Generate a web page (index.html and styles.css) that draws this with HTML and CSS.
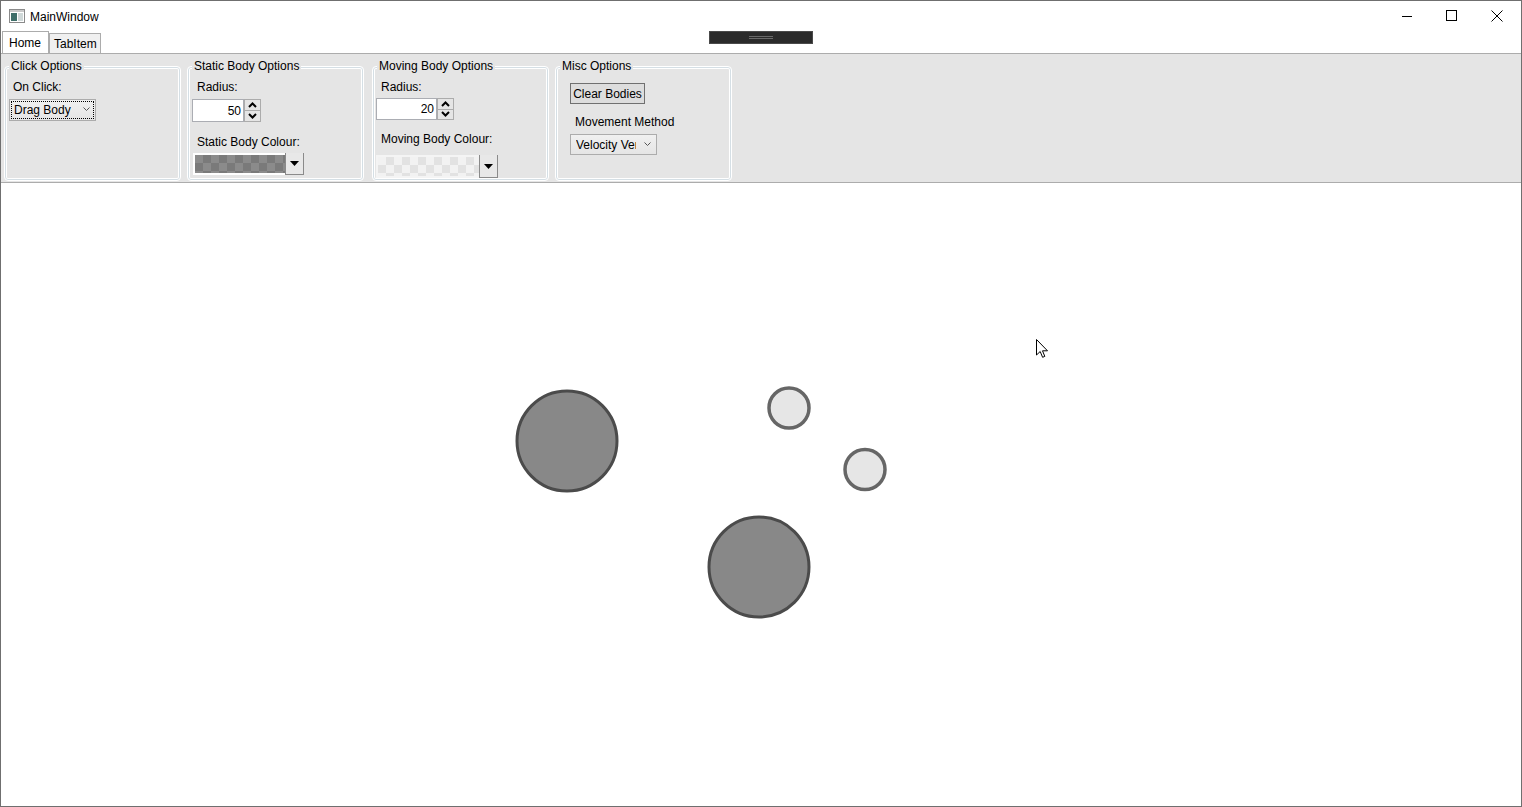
FILE: index.html
```html
<!DOCTYPE html>
<html>
<head>
<meta charset="utf-8">
<link rel="stylesheet" href="styles.css">
</head>
<body>
<div class="window">
  <div class="titlebar">
    <svg class="app-icon" width="16" height="14" viewBox="0 0 16 14">
      <rect x="0.5" y="0.5" width="15" height="13" fill="#fff" stroke="#8a8a8a"/>
      <rect x="1" y="1" width="14" height="2" fill="#c9c9c9"/>
      <rect x="2" y="4" width="6" height="8" fill="#3f6f6a"/>
      <rect x="9" y="4" width="5" height="8" fill="#cfd8d8"/>
    </svg>
    <span class="title">MainWindow</span>
    <div class="controls">
      <div class="ctl"><svg width="12" height="12" viewBox="0 0 12 12"><line x1="1" y1="6.5" x2="11" y2="6.5" stroke="#000" stroke-width="1"/></svg></div>
      <div class="ctl"><svg width="12" height="12" viewBox="0 0 12 12"><rect x="0.5" y="0.5" width="10" height="10" fill="none" stroke="#000" stroke-width="1"/></svg></div>
      <div class="ctl"><svg width="12" height="12" viewBox="0 0 12 12"><path d="M0.5 0.5 L11.5 11.5 M11.5 0.5 L0.5 11.5" stroke="#000" stroke-width="1"/></svg></div>
    </div>
  </div>
  <div class="tabstrip">
    <div class="tab active">Home</div>
    <div class="tab">TabItem</div>
  </div>
  <div class="debugbar"><span class="grip"></span></div>
  <div class="panel">
    <div class="group g1">
      <span class="gtitle">Click Options</span>
      <div class="lbl l1">On Click:</div>
      <div class="combo focus c1"><span>Drag Body</span><svg class="chev" width="7" height="5" viewBox="0 0 7 5"><path d="M0.5 0.5 L3.5 3.5 L6.5 0.5" fill="none" stroke="#555" stroke-width="1"/></svg></div>
    </div>
    <div class="group g2">
      <span class="gtitle">Static Body Options</span>
      <div class="lbl l2">Radius:</div>
      <div class="updown u2">
        <div class="ud-text">50</div>
        <div class="ud-btns">
          <div class="ud-btn"><svg width="9" height="6" viewBox="0 0 9 6"><path d="M1 5 L4.5 1.5 L8 5" fill="none" stroke="#000" stroke-width="2"/></svg></div>
          <div class="ud-btn"><svg width="9" height="6" viewBox="0 0 9 6"><path d="M1 1 L4.5 4.5 L8 1" fill="none" stroke="#000" stroke-width="2"/></svg></div>
        </div>
      </div>
      <div class="lbl l2b">Static Body Colour:</div>
      <div class="picker p2">
        <div class="swatch dark"></div>
        <div class="pbtn"><svg width="9" height="5" viewBox="0 0 9 5"><path d="M0 0 H9 L4.5 5 Z" fill="#000"/></svg></div>
      </div>
    </div>
    <div class="group g3">
      <span class="gtitle">Moving Body Options</span>
      <div class="lbl l3">Radius:</div>
      <div class="updown u3">
        <div class="ud-text">20</div>
        <div class="ud-btns">
          <div class="ud-btn"><svg width="9" height="6" viewBox="0 0 9 6"><path d="M1 5 L4.5 1.5 L8 5" fill="none" stroke="#000" stroke-width="2"/></svg></div>
          <div class="ud-btn"><svg width="9" height="6" viewBox="0 0 9 6"><path d="M1 1 L4.5 4.5 L8 1" fill="none" stroke="#000" stroke-width="2"/></svg></div>
        </div>
      </div>
      <div class="lbl l3b">Moving Body Colour:</div>
      <div class="picker p3">
        <div class="swatch light"></div>
        <div class="pbtn"><svg width="9" height="5" viewBox="0 0 9 5"><path d="M0 0 H9 L4.5 5 Z" fill="#000"/></svg></div>
      </div>
    </div>
    <div class="group g4">
      <span class="gtitle">Misc Options</span>
      <div class="button b4">Clear Bodies</div>
      <div class="lbl l4">Movement Method</div>
      <div class="combo c4"><span class="clip">Velocity Verlet</span><svg class="chev" width="7" height="5" viewBox="0 0 7 5"><path d="M0.5 0.5 L3.5 3.5 L6.5 0.5" fill="none" stroke="#555" stroke-width="1"/></svg></div>
    </div>
  </div>
  <div class="canvas">
    <svg class="scene" width="1520" height="623" viewBox="0 0 1520 623">
      <circle cx="566" cy="258" r="50" fill="#888888" stroke="#4b4b4b" stroke-width="3"/>
      <circle cx="758" cy="384" r="50" fill="#888888" stroke="#4b4b4b" stroke-width="3"/>
      <circle cx="788" cy="225" r="20" fill="#e6e6e6" stroke="#666666" stroke-width="3.5"/>
      <circle cx="864" cy="286.5" r="20" fill="#e6e6e6" stroke="#666666" stroke-width="3.5"/>
    </svg>
    <svg class="cursor" width="13" height="20" viewBox="0 0 13 20">
      <path d="M0.5 0.5 L0.5 16 L4.2 12.5 L6.6 18.3 L8.8 17.4 L6.5 11.8 L11.5 11.8 Z" fill="#fff" stroke="#000" stroke-width="1" stroke-linejoin="miter"/>
    </svg>
  </div>
</div>
</body>
</html>
```

FILE: styles.css
```css
* { box-sizing: border-box; }
html, body { margin: 0; padding: 0; }
body {
  font-family: "Liberation Sans", Arial, sans-serif;
  font-size: 12px;
  color: #000;
  background: #fff;
}
.window {
  position: relative;
  width: 1522px;
  height: 807px;
  border: 1px solid #6f6f6f;
  display: flex;
  flex-direction: column;
  background: #fff;
  overflow: hidden;
}
.titlebar {
  height: 30px;
  display: flex;
  align-items: center;
  flex-shrink: 0;
}
.app-icon { margin-left: 8px; }
.title { margin-left: 5px; line-height: 16px; margin-top: 1px; }
.controls { margin-left: auto; display: flex; align-self: flex-start; margin-right: 2px; }
.ctl {
  width: 45px;
  height: 30px;
  display: flex;
  align-items: center;
  justify-content: center;
}
.ctl svg { margin-top: -1px; }
.tabstrip {
  height: 22px;
  display: flex;
  align-items: flex-end;
  padding-left: 1px;
  flex-shrink: 0;
}
.tab {
  height: 20px;
  line-height: 21px;
  padding: 0 4px;
  border: 1px solid #acacac;
  border-bottom: none;
  background: #f0f0f0;
  margin-left: -1px;
}
.tab.active {
  height: 22px;
  line-height: 22px;
  background: #fff;
  width: 47px;
  padding-left: 6px;
  margin-left: 0;
  position: relative;
  z-index: 1;
  margin-right: 1px;
}
.tab:not(.active) { width: 52px; }
.debugbar {
  position: absolute;
  left: 708px;
  top: 30px;
  width: 104px;
  height: 13px;
  background: #2b2b2b;
  border: 1px solid #4a4a4a;
  display: flex;
  align-items: center;
  justify-content: center;
}
.grip {
  width: 24px;
  height: 3px;
  border-top: 1px solid #6a6a6a;
  border-bottom: 1px solid #6a6a6a;
}
.panel {
  height: 130px;
  flex-shrink: 0;
  background: #e5e5e5;
  border-top: 1px solid #acacac;
  border-bottom: 1px solid #acacac;
  display: flex;
  align-items: flex-start;
  padding: 12px 0 0 3px;
}
.group {
  position: relative;
  width: 177px;
  height: 115px;
  border: 1px solid #fff;
  border-radius: 4px;
  box-shadow: inset 0 0 0 1px #d5dfe5, inset 0 0 0 2px #fff;
  display: flex;
  flex-direction: column;
  align-items: flex-start;
}
.g2 { margin-left: 6px; }
.g3 { margin-left: 8px; }
.g4 { margin-left: 6px; }
.gtitle {
  position: absolute;
  top: -8px;
  left: 4px;
  line-height: 14px;
  padding: 0 2px;
  background: #e5e5e5;
}
.lbl { line-height: 16px; white-space: nowrap; }
.l1 { margin: 12px 0 0 8px; }
.l2 { margin: 12px 0 0 9px; }
.l2b { margin: 12px 0 0 9px; }
.l3 { margin: 12px 0 0 8px; }
.l3b { margin: 11px 0 0 8px; }
.l4 { margin: 10px 0 0 19px; }

.combo {
  position: relative;
  width: 87px;
  height: 22px;
  border: 1px solid #acacac;
  background: linear-gradient(#f0f0f0, #e5e5e5);
  display: flex;
  align-items: center;
  padding-left: 4px;
  overflow: hidden;
  white-space: nowrap;
}
.combo.focus { outline: 1px dotted #000; outline-offset: -3px; }
.combo .chev { position: absolute; right: 5px; top: 7px; }
.c1 { margin: 4px 0 0 4px; }
.c4 { margin: 4px 0 0 14px; height: 21px; padding-left: 5px; }
.clip { display: block; width: 60px; overflow: hidden; }

.updown { display: flex; height: 23px; }
.u2 { margin: 4px 0 0 4px; }
.u3 { margin: 3px 0 0 3px; height: 22px; }
.ud-text {
  background: #fff;
  border: 1px solid #abadb3;
  padding-right: 2px;
  display: flex;
  align-items: center;
  justify-content: flex-end;
}
.u2 .ud-text { width: 52px; }
.u3 .ud-text { width: 61px; }
.ud-btns {
  width: 17px;
  display: flex;
  flex-direction: column;
  border: 1px solid #acacac;
  border-left: none;
  background: #e5e5e5;
}
.ud-btn {
  flex: 1;
  display: flex;
  align-items: center;
  justify-content: center;
  border-left: 1px solid #acacac;
}
.ud-btn + .ud-btn { border-top: 1px solid #acacac; }

.picker { display: flex; }
.p2 { margin: 3px 0 0 5px; width: 111px; height: 22px; }
.p3 { margin: 8px 0 0 3px; width: 122px; height: 23px; }
.swatch {
  flex: 1;
  border: 2px solid #fff;
  border-right: none;
}
.swatch.dark {
  background: repeating-conic-gradient(#7a7a7a 0 25%, #8b8b8b 0 50%) 0 0 / 16px 16px;
}
.swatch.light {
  background: repeating-conic-gradient(#e2e2e2 0 25%, #f2f2f2 0 50%) 0 0 / 16px 16px;
  border-color: #f4f4f4;
}
.pbtn {
  width: 19px;
  border: 1px solid #8a8a8a;
  border-top: none;
  background: #e8e8e8;
  display: flex;
  align-items: center;
  justify-content: center;
}
.button {
  width: 75px;
  height: 21px;
  border: 1px solid #707070;
  background: #dddddd;
  display: flex;
  align-items: center;
  justify-content: center;
  white-space: nowrap;
}
.b4 { margin: 16px 0 0 14px; }

.canvas {
  position: relative;
  flex: 1;
  background: #fff;
}
.scene { display: block; }
.cursor {
  position: absolute;
  left: 1035px;
  top: 156px;
}
```
